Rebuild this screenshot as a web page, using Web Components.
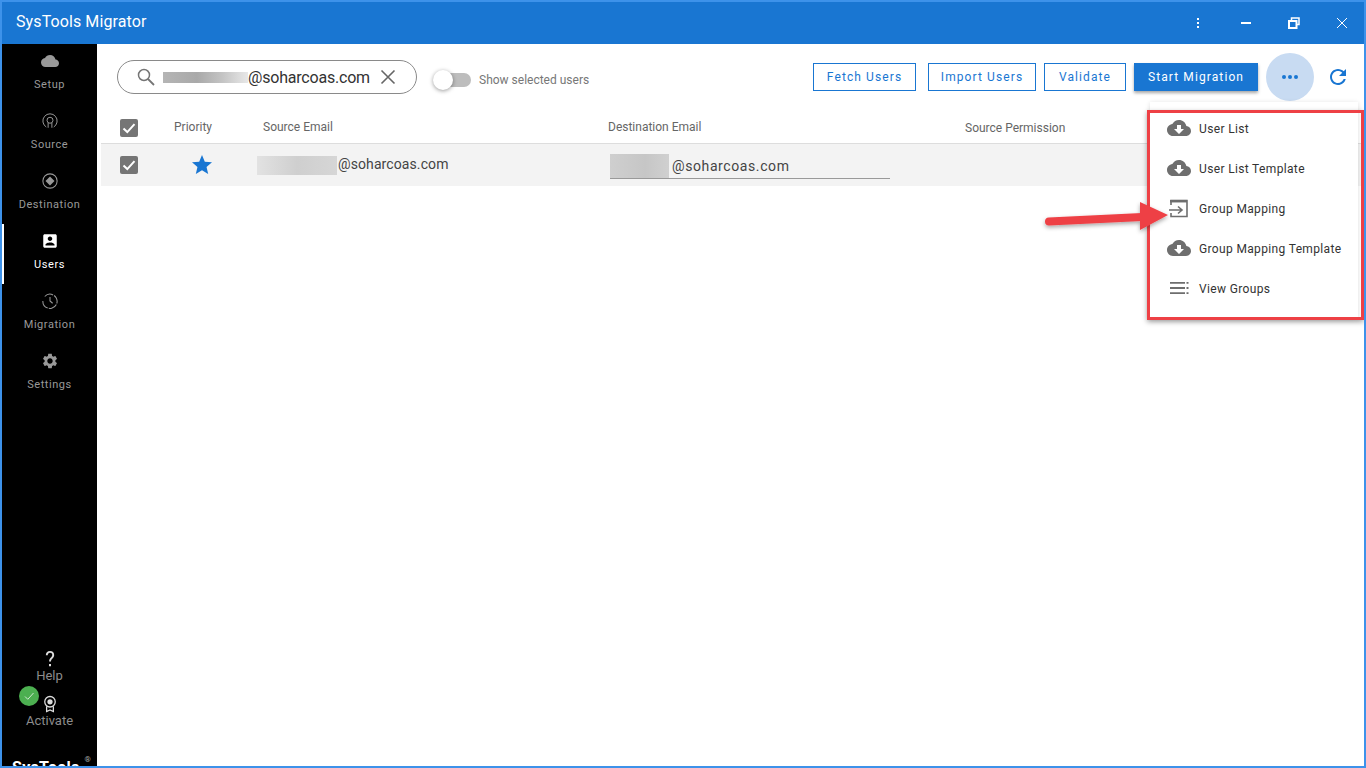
<!DOCTYPE html>
<html lang="en">
<head>
<meta charset="utf-8">
<title>SysTools Migrator</title>
<style>
  html, body { margin: 0; padding: 0; overflow: hidden; background: #fff; }
  body { font-family: Roboto, "Liberation Sans", sans-serif; }
</style>
</head>
<body>
<app-window>
  <title-bar slot="top">SysTools Migrator</title-bar>
  <side-nav slot="nav">
    <nav-item icon="cloud">Setup</nav-item>
    <nav-item icon="source">Source</nav-item>
    <nav-item icon="destination">Destination</nav-item>
    <nav-item icon="users" active>Users</nav-item>
    <nav-item icon="migration">Migration</nav-item>
    <nav-item icon="settings">Settings</nav-item>
  </side-nav>
  <tool-bar>
    <search-box value="@soharcoas.com"></search-box>
    <toggle-switch>Show selected users</toggle-switch>
    <action-button style="margin-left:206px;width:103px">Fetch Users</action-button>
    <action-button style="margin-left:12px;width:108px">Import Users</action-button>
    <action-button style="margin-left:8px;width:82px">Validate</action-button>
    <action-button primary style="margin-left:8px;width:124px">Start Migration</action-button>
    <more-button></more-button>
    <refresh-button></refresh-button>
  </tool-bar>
  <user-table>
    <user-row source="@soharcoas.com" dest="@soharcoas.com"></user-row>
  </user-table>
  <action-menu slot="over">
    <menu-item icon="download">User List</menu-item>
    <menu-item icon="download">User List Template</menu-item>
    <menu-item icon="import">Group Mapping</menu-item>
    <menu-item icon="download">Group Mapping Template</menu-item>
    <menu-item icon="list">View Groups</menu-item>
  </action-menu>
  <call-out slot="over"></call-out>
</app-window>

<script>
const ICONS = {
    cloud: '<path fill="currentColor" d="M19.35 10.04C18.67 6.59 15.64 4 12 4 9.11 4 6.6 5.64 5.35 8.04 2.34 8.36 0 10.91 0 14c0 3.31 2.69 6 6 6h13c2.76 0 5-2.24 5-5 0-2.64-2.05-4.78-4.65-4.96z"/>',
    source: '<g fill="none" stroke="currentColor" stroke-width="1.3"><path d="M7 20A9.500 9.500 0 1 1 17 20"/><circle cx="12" cy="11" r="4"/><path d="M9.500 21v-6.500M14.500 21v-6.500"/></g>',
    destination: '<circle cx="12" cy="12" r="9.500" fill="none" stroke="currentColor" stroke-width="1.400"/><path fill="currentColor" d="M12 6l6 6-6 6-6-6z"/>',
    users: '<path fill="currentColor" d="M3 5v14c0 1.1.89 2 2 2h14c1.1 0 2-.9 2-2V5c0-1.1-.9-2-2-2H5c-1.11 0-2 .9-2 2zm12 4c0 1.66-1.34 3-3 3s-3-1.34-3-3 1.34-3 3-3 3 1.34 3 3zm-9 8c0-2 4-3.100 6-3.100s6 1.100 6 3.100v1H6v-1z"/>',
    migration: '<g fill="none" stroke="currentColor" stroke-width="1.400"><path d="M5 6A9.500 9.500 0 1 1 2.500 12" stroke-dasharray="12 1.500"/><path d="M12 6.500V12l3.500 3"/></g>',
    settings: '<path fill="currentColor" d="M19.14 12.94c.04-.3.06-.61.06-.94 0-.32-.02-.64-.07-.94l2.03-1.58c.18-.14.23-.41.12-.61l-1.92-3.32c-.12-.22-.37-.29-.59-.22l-2.39.96c-.5-.38-1.03-.7-1.62-.94l-.36-2.54c-.04-.24-.24-.41-.48-.41h-3.84c-.24 0-.43.17-.47.41l-.36 2.54c-.59.24-1.13.57-1.62.94l-2.39-.96c-.22-.08-.47 0-.59.22L2.74 8.87c-.12.21-.08.47.12.61l2.03 1.58c-.05.3-.09.63-.09.94s.02.64.07.94l-2.03 1.58c-.18.14-.23.41-.12.61l1.92 3.32c.12.22.37.29.59.22l2.39-.96c.5.38 1.03.7 1.62.94l.36 2.54c.05.24.24.41.48.41h3.84c.24 0 .44-.17.47-.41l.36-2.54c.59-.24 1.13-.56 1.62-.94l2.39.96c.22.08.47 0 .59-.22l1.92-3.32c.12-.22.07-.47-.12-.61l-2.01-1.58zM12 15.600c-1.98 0-3.600-1.62-3.600-3.600s1.62-3.600 3.600-3.600 3.600 1.62 3.600 3.600-1.62 3.600-3.600 3.600z"/>',
    download: '<path fill="currentColor" d="M19.35 10.04C18.67 6.59 15.64 4 12 4 9.11 4 6.6 5.64 5.35 8.04 2.34 8.36 0 10.91 0 14c0 3.31 2.69 6 6 6h13c2.76 0 5-2.24 5-5 0-2.64-2.05-4.78-4.65-4.96z"/><path fill="#fff" d="M17 13l-5 5-5-5h3V9h4v4h3z"/>',
    import: '<g fill="none" stroke="currentColor"><path stroke-width="1.600" d="M4 9V4.500h16v16H4V17"/><path stroke-width="2.500" d="M3 5.200h17"/><path stroke-width="1.600" d="M2 14h13M11 10.500l4 3.500-4 3.500"/></g>',
    list: '<path fill="currentColor" d="M3 6h15v1.800H3zM3 11.100h15v1.800H3zM3 16.200h15v1.800H3zM19.500 6h2v1.800h-2zM19.500 11.100h2v1.800h-2zM19.500 16.200h2v1.800h-2z"/>',
    help: '<path fill="currentColor" d="M10.800 18h2.400v2.600h-2.400zM12 2.500C8.700 2.500 7 4.700 7 7.500h2.300c0-1.700 1-3 2.700-3s2.700 1.100 2.700 2.700c0 2.800-3.800 3.500-3.800 7.800h2.300c0-3.200 3.800-4 3.800-7.800 0-2.800-1.900-4.700-5-4.700z"/>',
    award: '<g fill="none" stroke="currentColor" stroke-width="1.700"><circle cx="12" cy="9" r="7"/><path d="M7.500 15v7l4.500-2 4.500 2v-7"/></g><circle cx="12" cy="9" r="3.500" fill="currentColor"/>'
};

const svgIcon = (name, size) =>
    `<svg width="${size}" height="${size}" viewBox="0 0 24 24" aria-hidden="true">${ICONS[name]}</svg>`;

class ShadowBase extends HTMLElement {
    constructor() {
        super();
        this.attachShadow({ mode: 'open' });
    }
    render(html) {
        this.shadowRoot.innerHTML = html;
    }
}

class AppWindow extends ShadowBase {
    connectedCallback() {
        this.render(`
      <style>
        :host {
            display: flex;
            flex-direction: column;
            position: relative;
            box-sizing: border-box;
            width: 1366px;
            height: 768px;
            border: 2px solid #3d92ea;
            background: #fff;
            overflow: hidden;
        }
        .body { flex: 1; display: flex; min-height: 0; }
        main { flex: 1; min-width: 0; display: flex; flex-direction: column; }
      </style>
      <slot name="top"></slot>
      <div class="body">
        <slot name="nav"></slot>
        <main><slot></slot></main>
      </div>
      <slot name="over"></slot>`);
    }
}

class TitleBar extends ShadowBase {
    connectedCallback() {
        this.render(`
      <style>
        :host {
            display: flex;
            align-items: center;
            flex: none;
            height: 42px;
            padding-left: 14px;
            background: #1976d2;
            color: #fff;
            font: 400 16px Roboto, sans-serif;
            letter-spacing: .1px;
        }
        .title { flex: 1; margin-top: -3px; }
        .ctl { display: flex; justify-content: center; align-items: center; width: 48px; height: 42px; }
        .ctl svg { display: block; }
      </style>
      <div class="title"><slot></slot></div>
      <div class="ctl"><svg width="12" height="12" viewBox="0 0 12 12"><path fill="#fff" d="M5 1h2v2H5zM5 5h2v2H5zM5 9h2v2H5z"/></svg></div>
      <div class="ctl"><svg width="12" height="12" viewBox="0 0 12 12"><path fill="#fff" d="M1 5h10v2H1z"/></svg></div>
      <div class="ctl"><svg width="12" height="12" viewBox="0 0 12 12"><path fill="none" stroke="#fff" stroke-width="1.500" d="M3.500 3V1H11v6.500H9"/><path fill="none" stroke="#fff" stroke-width="2" d="M1 4h7.500v7H1z"/></svg></div>
      <div class="ctl" style="margin-right:-2px"><svg width="12" height="12" viewBox="0 0 12 12"><path fill="none" stroke="#fff" stroke-width="1" d="M1 1l10 10M11 1L1 11"/></svg></div>`);
    }
}

class SideNav extends ShadowBase {
    connectedCallback() {
        this.render(`
      <style>
        :host {
            display: flex;
            flex-direction: column;
            flex: none;
            position: relative;
            width: 95px;
            height: 100%;
            background: #000;
            overflow: hidden;
        }
        .bottom {
            margin-top: auto;
            display: flex;
            flex-direction: column;
            align-items: center;
            flex: none;
            color: #8c8c8c;
            font: 400 13px Roboto, sans-serif;
            height: 118px;
            padding-top: 1px;
            box-sizing: border-box;
        }
        .bottom svg { display: block; color: #ddd; flex: none; }
        .bottom .lbl { line-height: 16px; }
        .help { margin: -1px 0 11px; }
        .badge {
            position: absolute;
            left: 17px;
            top: 642px;
            width: 20px;
            height: 20px;
            border-radius: 50%;
            background: #4caf50;
        }
        .logo {
            align-self: flex-start;
            margin: 29px 0 0 10px;
            color: #fff;
            font: 700 16px Roboto, sans-serif;
            letter-spacing: .3px;
            line-height: 19px;
            white-space: nowrap;
            display: flex;
        }
        .logo sup { font-size: 8px; line-height: 8px; font-weight: 400; color: #aaa; letter-spacing: 0; margin: -2px 0 0 5px; }
      </style>
      <slot></slot>
      <div class="bottom">
        ${svgIcon('help', 20)}
        <div class="lbl help">Help</div>
        ${svgIcon('award', 18)}
        <div class="lbl">Activate</div>
        <div class="logo"><span>SysTools</span><sup>®</sup></div>
      </div>
      <div class="badge"><svg width="20" height="20" viewBox="0 0 20 20"><path fill="none" stroke="#cfe9d0" stroke-width="1" d="M6 10.500l2.800 2.800L14.500 7"/></svg></div>`);
    }
}

class NavItem extends ShadowBase {
    connectedCallback() {
        const active = this.hasAttribute('active');
        this.render(`
      <style>
        :host {
            display: flex;
            flex-direction: column;
            align-items: center;
            flex: none;
            box-sizing: border-box;
            height: 60px;
            padding-top: 8px;
            color: ${active ? '#fff' : '#999'};
            font: 400 11px Roboto, sans-serif;
            letter-spacing: .55px;
            ${active ? 'box-shadow: inset 2px 0 0 #fff;' : ''}
        }
        svg { display: block; }
        .lbl { margin-top: 8px; line-height: 14px; }
      </style>
      ${svgIcon(this.getAttribute('icon'), 18)}
      <div class="lbl"><slot></slot></div>`);
    }
}

class ToolBar extends ShadowBase {
    connectedCallback() {
        this.render(`
      <style>
        :host {
            display: flex;
            align-items: center;
            flex: none;
            height: 48px;
            margin-top: 9px;
            padding-left: 20px;
        }
      </style>
      <slot></slot>`);
    }
}

class SearchBox extends ShadowBase {
    connectedCallback() {
        this.render(`
      <style>
        :host {
            display: flex;
            align-items: center;
            flex: none;
            box-sizing: border-box;
            width: 300px;
            height: 34px;
            padding-left: 19px;
            border: 1px solid #8a8a8a;
            border-radius: 17px;
            color: #333;
            font: 400 16px Roboto, sans-serif;
            letter-spacing: -.2px;
        }
        svg { display: block; flex: none; }
        .blur {
            width: 85px;
            height: 11px;
            margin-left: 8px;
            background: linear-gradient(90deg, #b5b5b5, #a9a9a9 40%, #c4c4c4 70%, #e8e8e8);
            filter: blur(.6px);
        }
        .x { margin-left: 10px; }
      </style>
      <svg width="18" height="18" viewBox="0 0 18 18"><circle cx="7" cy="7" r="5.500" fill="none" stroke="#757575" stroke-width="1.500"/><path d="M11 11l6 6" stroke="#757575" stroke-width="1.800"/></svg>
      <div class="blur"></div>
      <span>${this.getAttribute('value')}</span>
      <svg class="x" width="16" height="16" viewBox="0 0 16 16"><path d="M1.500 1.500l13 13M14.500 1.500l-13 13" stroke="#666" stroke-width="1.600"/></svg>`);
    }
}

class ToggleSwitch extends ShadowBase {
    connectedCallback() {
        this.render(`
      <style>
        :host {
            display: flex;
            align-items: center;
            flex: none;
            margin-left: 19px;
            color: #777;
            font: 400 12px Roboto, sans-serif;
            white-space: nowrap;
            width: 171px;
        }
        .track {
            position: relative;
            flex: none;
            width: 35px;
            height: 14px;
            margin: 6px 8px 0 0;
            border-radius: 7px;
            background: #bdbdbd;
        }
        .thumb {
            position: absolute;
            left: -3px;
            top: -3px;
            width: 20px;
            height: 20px;
            border-radius: 50%;
            background: #fff;
            box-shadow: 0 1px 4px rgba(0, 0, 0, .4);
        }
        .lbl { margin-top: 6px; }
      </style>
      <div class="track"><div class="thumb"></div></div>
      <div class="lbl"><slot></slot></div>`);
    }
}

class ActionButton extends ShadowBase {
    connectedCallback() {
        const primary = this.hasAttribute('primary');
        this.render(`
      <style>
        :host {
            display: flex;
            align-items: center;
            justify-content: center;
            flex: none;
            box-sizing: border-box;
            height: 28px;
            border: 1px solid #1976d2;
            background: ${primary ? '#1976d2' : '#fff'};
            color: ${primary ? '#fff' : '#1976d2'};
            font: 400 12px Roboto, sans-serif;
            letter-spacing: 1.100px;
            ${primary ? 'box-shadow: 0 2px 3px rgba(0, 0, 0, .35);' : ''}
        }
      </style>
      <slot></slot>`);
    }
}

class MoreButton extends ShadowBase {
    connectedCallback() {
        this.render(`
      <style>
        :host {
            display: flex;
            align-items: center;
            justify-content: center;
            flex: none;
            width: 48px;
            height: 48px;
            margin-left: 8px;
            border-radius: 50%;
            background: #c8dbf2;
        }
        svg { display: block; }
      </style>
      <svg width="18" height="6" viewBox="0 0 18 6"><circle cx="3" cy="3" r="2" fill="#1976d2"/><circle cx="9" cy="3" r="2" fill="#1976d2"/><circle cx="15" cy="3" r="2" fill="#1976d2"/></svg>`);
    }
}

class RefreshButton extends ShadowBase {
    connectedCallback() {
        this.render(`
      <style>
        :host { display: block; flex: none; margin-left: 12px; width: 24px; height: 24px; color: #1976d2; }
        svg { display: block; }
      </style>
      <svg width="24" height="24" viewBox="0 0 24 24"><path fill="currentColor" d="M17.650 6.350C16.200 4.900 14.210 4 12 4c-4.420 0-7.990 3.580-7.990 8s3.570 8 7.990 8c3.730 0 6.840-2.550 7.730-6h-2.080c-.82 2.330-3.040 4-5.650 4-3.310 0-6-2.690-6-6s2.690-6 6-6c1.660 0 3.140.69 4.220 1.780L13 11h7V4l-2.350 2.350z"/></svg>`);
    }
}

const CHECKBOX = `<svg width="18" height="18" viewBox="0 0 18 18" style="display:block"><rect width="18" height="18" rx="2" fill="#757575"/><path d="M3.500 9.500l3.800 3.600 7.200-8" fill="none" stroke="#fff" stroke-width="2"/></svg>`;

class UserTable extends ShadowBase {
    connectedCallback() {
        this.render(`
      <style>
        :host { display: block; flex: none; margin: 10px 0 0 4px; }
        .head {
            display: grid;
            grid-template-columns: 73px 89px 345px 357px 1fr;
            align-items: center;
            height: 32px;
            border-bottom: 1px solid #ddd;
            color: #666;
            font: 400 12px Roboto, sans-serif;
        }
        .check { padding-left: 19px; margin-top: 2px; }
        .low { margin-top: 1px; }
      </style>
      <div class="head">
        <div class="check">${CHECKBOX}</div>
        <div>Priority</div>
        <div>Source Email</div>
        <div>Destination Email</div>
        <div class="low">Source Permission</div>
      </div>
      <slot></slot>`);
    }
}

class UserRow extends ShadowBase {
    connectedCallback() {
        this.render(`
      <style>
        :host {
            display: grid;
            grid-template-columns: 73px 83px 353px 1fr;
            align-items: center;
            height: 42px;
            background: #f3f3f3;
            color: #444;
            font: 400 14px Roboto, sans-serif;
        }
        .check { padding-left: 19px; }
        .star { padding-left: 16px; color: #1976d2; }
        .star svg { display: block; }
        .cell { display: flex; align-items: center; }
        .src { letter-spacing: .1px; }
        .src .blur { width: 80px; height: 19px; background: linear-gradient(90deg, #e2e2e2, #cfcfcf 50%, #d6d6d6); }
        .src span { margin: -3px 0 0 1px; }
        .dst {
            box-sizing: border-box;
            width: 280px;
            height: 26px;
            margin-top: 1px;
            letter-spacing: .6px;
            border-bottom: 1px solid #999;
        }
        .dst .blur { width: 59px; height: 24px; margin-top: 1px; align-self: flex-start; background: linear-gradient(90deg, #cfcfcf, #c6c6c6 60%, #d0d0d0); }
        .dst span { margin: 1px 0 0 3px; }
      </style>
      <div class="check">${CHECKBOX}</div>
      <div class="star"><svg width="24" height="24" viewBox="0 0 24 24"><path fill="currentColor" d="M12 17.270L18.180 21l-1.640-7.030L22 9.240l-7.190-.61L12 2 9.190 8.630 2 9.240l5.460 4.730L5.820 21z"/></svg></div>
      <div class="cell src"><div class="blur"></div><span>${this.getAttribute('source')}</span></div>
      <div class="cell dst"><div class="blur"></div><span>${this.getAttribute('dest')}</span></div>`);
    }
}

class ActionMenu extends ShadowBase {
    connectedCallback() {
        this.render(`
      <style>
        :host {
            display: block;
            position: absolute;
            left: 1148px;
            top: 100px;
            box-sizing: border-box;
            width: 208px;
            height: 216px;
            padding-top: 6px;
            background: #fff;
            box-shadow: 0 1px 5px rgba(0, 0, 0, .14);
        }
      </style>
      <slot></slot>`);
    }
}

class MenuItem extends ShadowBase {
    connectedCallback() {
        const icon = this.getAttribute('icon');
        this.render(`
      <style>
        :host {
            display: flex;
            align-items: center;
            height: 40px;
            padding-left: 17px;
            color: #333;
            font: 400 12px Roboto, sans-serif;
            letter-spacing: .35px;
            white-space: nowrap;
        }
        svg { display: block; flex: none; color: #6e6e6e; margin-right: 8px; }
        .lbl { margin-top: 1px; }
      </style>
      ${svgIcon(icon, 24)}
      <div class="lbl"><slot></slot></div>`);
    }
}

class CallOut extends ShadowBase {
    connectedCallback() {
        this.render(`
      <style>
        :host { display: block; position: absolute; inset: 0; pointer-events: none; }
        .box {
            position: absolute;
            left: 1145px;
            top: 108px;
            box-sizing: border-box;
            width: 217px;
            height: 210px;
            border: 3px solid #ee4045;
            box-shadow: 0 2px 5px rgba(0, 0, 0, .35);
        }
        svg { position: absolute; left: 1036px; top: 190px; overflow: visible; }
      </style>
      <div class="box"></div>
      <svg width="140" height="40" viewBox="0 0 140 40">
        <defs><filter id="s" x="-10%" y="-30%" width="120%" height="170%"><feDropShadow dx="0" dy="2" stdDeviation="2" flood-color="#000" flood-opacity=".35"/></filter></defs>
        <g filter="url(#s)">
          <path d="M11 29.500L104 25" stroke="#ee4045" stroke-width="8" stroke-linecap="round" fill="none"/>
          <path fill="#ee4045" d="M102 10l28 13-28 15z"/>
        </g>
      </svg>`);
    }
}

customElements.define('app-window', AppWindow);
customElements.define('title-bar', TitleBar);
customElements.define('side-nav', SideNav);
customElements.define('nav-item', NavItem);
customElements.define('tool-bar', ToolBar);
customElements.define('search-box', SearchBox);
customElements.define('toggle-switch', ToggleSwitch);
customElements.define('action-button', ActionButton);
customElements.define('more-button', MoreButton);
customElements.define('refresh-button', RefreshButton);
customElements.define('user-table', UserTable);
customElements.define('user-row', UserRow);
customElements.define('action-menu', ActionMenu);
customElements.define('menu-item', MenuItem);
customElements.define('call-out', CallOut);
</script>
</body>
</html>
